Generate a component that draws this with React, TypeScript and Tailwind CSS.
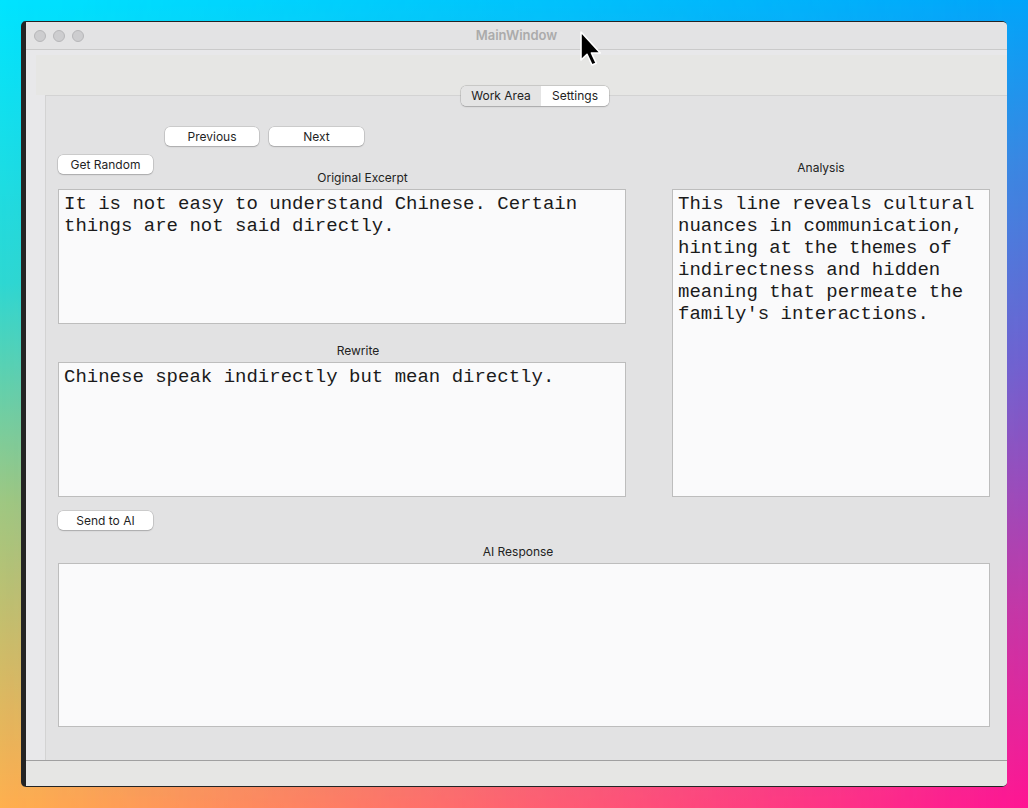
import type { ReactNode } from 'react'

const sans = '[font-family:Inter,sans-serif]'
const mono = "[font-family:'Liberation_Mono',monospace]"

function Button({ children, className = '' }: { children: ReactNode; className?: string }) {
  return (
    <button
      type="button"
      className={`h-[19px] shrink-0 rounded-[5px] bg-white text-[12px] leading-none text-[#1f1f1f] shadow-[0_0_0_0.5px_rgba(0,0,0,0.2),0_1px_1.5px_rgba(0,0,0,0.16)] ${sans} ${className}`}
    >
      {children}
    </button>
  )
}

function Label({ children, className = '' }: { children: ReactNode; className?: string }) {
  return (
    <div className={`h-[14px] text-center text-[12px] leading-[14px] text-[#222] ${sans} ${className}`}>
      {children}
    </div>
  )
}

function TextBox({ text, className = '' }: { text: string; className?: string }) {
  return (
    <div
      className={`border border-[#bdbdbd] bg-[#fafafb] px-[5px] pt-[3px] text-[19px] leading-[22px] text-[#1b1b1b] ${mono} ${className}`}
    >
      {text}
    </div>
  )
}

function Cursor() {
  return (
    <svg className="absolute left-[579px] top-[30px] z-20" width="26" height="40" viewBox="0 0 26 40">
      <path
        d="M2 2 L2 30 L8 24.4 L13 35 L17.2 33.2 L12.4 23 L21.3 23 Z"
        fill="#000"
        stroke="#fff"
        strokeWidth="1.6"
        strokeLinejoin="round"
      />
    </svg>
  )
}

export default function App() {
  return (
    <div className="relative h-[808px] w-[1028px] overflow-hidden bg-[linear-gradient(to_bottom,#00e4ff,#2ed8d2_35%,#9ec882_62%,#ffb04e)] pl-[21px] pt-[21px]">
      {/* right half of the wallpaper, faded in from the left */}
      <div className="absolute inset-0 bg-[linear-gradient(to_bottom,#00a4fa,#3a86e2_20%,#7060d0_45%,#c236a8_75%,#ff1493)] [mask-image:linear-gradient(to_right,transparent,black)]" />

      <Cursor />

      {/* window */}
      <div className="relative z-10 flex h-[766px] w-[986px] flex-col overflow-hidden rounded-[5px] border-y border-l-[5px] border-[#242424] bg-[#e8e8ea]">
        {/* title bar */}
        <div className="flex h-[28px] shrink-0 items-center border-b border-[#cacaca] bg-[#e3e3e4]">
          <div className="flex w-[58px] gap-[7px] pl-[8px]">
            <span className="h-[12px] w-[12px] rounded-full border border-[#b7b7b9] bg-[#cdcdcf]" />
            <span className="h-[12px] w-[12px] rounded-full border border-[#b7b7b9] bg-[#cdcdcf]" />
            <span className="h-[12px] w-[12px] rounded-full border border-[#b7b7b9] bg-[#cdcdcf]" />
          </div>
          <div className={`flex-1 text-center text-[13px] font-semibold text-[#ababab] ${sans}`}>MainWindow</div>
          <div className="w-[58px]" />
        </div>

        {/* toolbar */}
        <div className="mt-[5px] ml-[10px] h-[40px] shrink-0 bg-[#e6e6e4]" />

        {/* tab widget */}
        <div className="flex h-[665px] shrink-0">
          <div className="w-[19px] shrink-0 bg-[#e8e8ea]" />
          <div className="flex flex-1 flex-col border-l border-t border-[#d3d3d3] bg-[#e2e2e3]">
            <div
              className={`relative z-10 -mt-[10px] ml-[415px] flex h-[20px] w-[148px] overflow-hidden rounded-[5px] text-[12px] text-[#222] shadow-[0_0_0_0.5px_rgba(0,0,0,0.2),0_0.5px_1.5px_rgba(0,0,0,0.18)] ${sans}`}
            >
              <div className="flex w-[80px] items-center justify-center bg-[#e4e4e4]">Work Area</div>
              <div className="flex w-[68px] items-center justify-center bg-white">Settings</div>
            </div>

            <div className="mt-[21px] ml-[119px] flex gap-[10px]">
              <Button className="w-[94px]">Previous</Button>
              <Button className="w-[95px]">Next</Button>
            </div>

            <div className="mt-[9px] ml-[12px] mr-[17px] flex gap-[46px]">
              <div className="flex w-[568px] flex-col">
                <Button className="w-[95px]">Get Random</Button>
                <Label className="-mt-[3px] pl-[41px]">Original Excerpt</Label>
                <TextBox
                  className="mt-[4px] h-[135px]"
                  text="It is not easy to understand Chinese. Certain things are not said directly."
                />
                <Label className="mt-[20px] pl-[32px]">Rewrite</Label>
                <TextBox className="mt-[4px] h-[135px]" text="Chinese speak indirectly but mean directly." />
              </div>
              <div className="flex w-[318px] flex-col">
                <Label className="mt-[6px] pr-[20px]">Analysis</Label>
                <TextBox
                  className="mt-[14px] h-[308px]"
                  text="This line reveals cultural nuances in communication, hinting at the themes of indirectness and hidden meaning that permeate the family's interactions."
                />
              </div>
            </div>

            <Button className="mt-[14px] ml-[12px] w-[95px]">Send to AI</Button>
            <Label className="mt-[15px] ml-[12px] mr-[17px] pr-[12px]">AI Response</Label>
            <TextBox className="mt-[4px] ml-[12px] mr-[17px] h-[164px]" text="" />
          </div>
        </div>

        {/* status bar */}
        <div className="h-[26px] shrink-0 border-t border-[#a0a0a0] bg-[#e6e6e4]" />
      </div>
    </div>
  )
}
